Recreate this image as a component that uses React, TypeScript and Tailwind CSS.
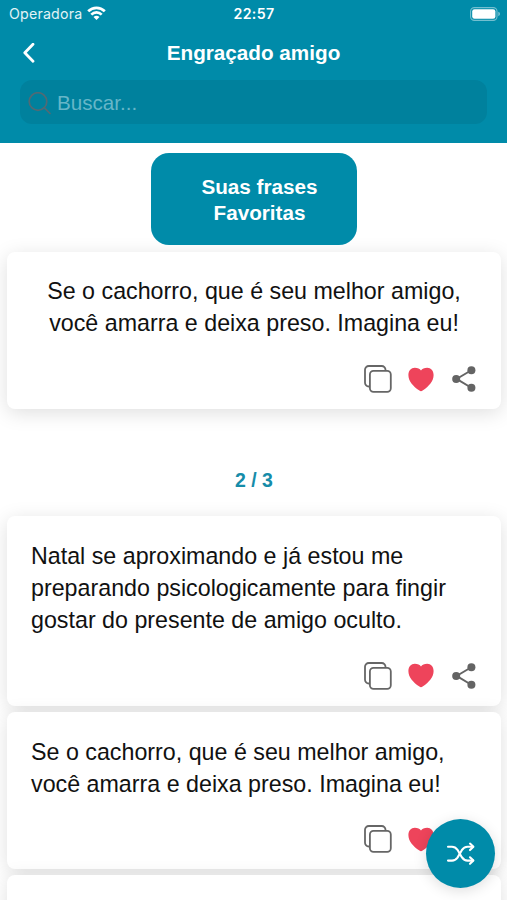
import { ReactNode } from "react";

function CopyIcon() {
  return (
    <svg width="28" height="28" viewBox="0 0 28 28" fill="none" stroke="#666" strokeWidth="1.8">
      <path d="M5.8 21.5 H4.8 A3.8 3.8 0 0 1 1 17.7 V4.8 A3.8 3.8 0 0 1 4.8 1 H17.7 A3.8 3.8 0 0 1 21.5 4.8 V5.8" />
      <rect x="5.9" y="5.9" width="20.9" height="20.9" rx="3.6" />
    </svg>
  );
}

function HeartIcon() {
  return (
    <svg width="26" height="25" viewBox="0 0 26 25" fill="#ee445b">
      <path d="M13 24.3 C12.4 24.3 11.9 24 11.4 23.6 C5 19.2 .4 14.2 .4 8 C.4 3.9 3.1.8 6.8.8 C9.7.8 11.8 1.8 13 3.6 C14.2 1.8 16.3.8 19.2.8 C22.9.8 25.6 3.9 25.6 8 C25.6 14.2 21 19.2 14.6 23.6 C14.1 24 13.6 24.3 13 24.3 Z" />
    </svg>
  );
}

function ShareIcon() {
  return (
    <svg width="24" height="26" viewBox="0 0 24 26" fill="#646464" stroke="#646464">
      <path d="M19.3 4.3 L4.6 12.9 L19.3 21.7" fill="none" strokeWidth="1.9" />
      <g stroke="none">
        <circle cx="19.4" cy="4.3" r="4" />
        <circle cx="4.2" cy="12.9" r="4" />
        <circle cx="19.4" cy="21.7" r="4" />
      </g>
    </svg>
  );
}

function ShuffleIcon() {
  return (
    <svg width="30" height="24" viewBox="0 0 30 24" fill="none" stroke="#fff" strokeWidth="2.1" strokeLinecap="round" strokeLinejoin="round">
      <path d="M2 4.8 H6 C8.7 4.8 10 5.8 11.5 7.8 L15.8 15.2 C17.4 17.6 19 18.6 21.5 18.6 H27" />
      <path d="M2 18.6 H6 C8.7 18.6 10 17.6 11.5 15.6 L15.8 8.2 C17.4 5.8 19 4.8 21.5 4.8 H27" />
      <path d="M24 1.6 L27.4 4.8 L24 8.1 M24 15.3 L27.4 18.6 L24 21.8" />
    </svg>
  );
}

function QuoteCard({ children, centered = false }: { children: ReactNode; centered?: boolean }) {
  return (
    <article className="rounded-lg bg-white pt-6 shadow-[0_4px_20px_rgba(0,0,0,0.13)]">
      <p className={centered ? "-mt-px mb-px text-center text-[23.25px] leading-8 text-[#111]" : "pl-6 text-[23.25px] leading-8 text-[#111]"}>
        {children}
      </p>
      <div className="flex h-[69.5px] items-center justify-end pr-[25px] pt-[10px]">
        <CopyIcon />
        <span className="ml-4"><HeartIcon /></span>
        <span className="ml-[18px]"><ShareIcon /></span>
      </div>
    </article>
  );
}

export default function App() {
  return (
    <div className="relative h-[900px] w-[507px] overflow-hidden bg-white font-['Liberation_Sans',Arial,sans-serif]">
      <header className="h-[142.5px] bg-[#008ba9] text-white">
        <div className="grid h-7 grid-cols-3 items-center pl-[9px] pr-[7px] font-[Inter,sans-serif]">
          <div className="flex items-center gap-[5px] text-[14.2px] tracking-[0.2px] text-[#e2f3f6]">
            <span>Operadora</span>
            <svg width="19" height="15" viewBox="0 0 19 15" fill="none" stroke="#fff" strokeWidth="2.7">
              <path d="M1.2 5.3 C5.9.6 13.1.6 17.8 5.3" />
              <path d="M4.3 8.6 C7.3 5.7 11.7 5.7 14.7 8.6" />
              <path d="M6.5 11 Q9.5 8.5 12.5 11 L9.5 14.1 Z" fill="#fff" stroke="none" />
            </svg>
          </div>
          <span className="pr-px text-center text-[14.2px] font-semibold tracking-[0.3px]">22:57</span>
          <svg className="justify-self-end" width="30" height="14" viewBox="0 0 30 14">
            <rect x=".6" y=".6" width="26.4" height="12.8" rx="3.8" fill="none" stroke="#fff" strokeOpacity=".45" strokeWidth="1.1" />
            <rect x="2.2" y="2.2" width="23.2" height="9.6" rx="2.3" fill="#fff" />
            <path d="M28.3 4.8 Q30 5.4 30 7 Q30 8.6 28.3 9.2 Z" fill="#fff" fillOpacity=".5" />
          </svg>
        </div>
        <div className="grid h-[52px] grid-cols-[40px_1fr_40px] items-center px-5">
          <svg width="18" height="22" viewBox="0 0 18 22" fill="none" stroke="#fff" strokeWidth="2.8" strokeLinecap="round" strokeLinejoin="round">
            <path d="M13 1.2 L4.8 9.7 L13 18.2" />
          </svg>
          <h1 className="pb-[3px] text-center text-[20.7px] font-bold">Engraçado amigo</h1>
        </div>
        <div className="mx-5 flex h-11 items-center rounded-xl bg-[#00819d] pl-2 text-[20.6px] text-[#66b6c8]">
          <svg className="mr-[6px] mt-[2px]" width="23" height="23" viewBox="0 0 23 23" fill="none" stroke="#526a74" strokeWidth="1.7" strokeLinecap="round">
            <circle cx="10" cy="9.5" r="8.8" />
            <path d="M16.2 15.7 L22 21.5" />
          </svg>
          <span className="pt-[3px]">Buscar...</span>
        </div>
      </header>

      <div className="flex justify-center pt-[10px]">
        <button className="h-[92.5px] w-[206px] rounded-[18px] bg-[#008ba9] pl-[12px] pt-[2px] text-[20.7px] font-bold leading-[26px] text-white">
          Suas frases<br />Favoritas
        </button>
      </div>

      <main className="mt-[6.5px] pl-[7px] pr-[6px]">
        <QuoteCard centered>
          Se o cachorro, que é seu melhor amigo,<br />você amarra e deixa preso. Imagina eu!
        </QuoteCard>
        <div className="flex h-[107px] items-center justify-center pt-9 text-[19.5px] font-bold text-[#168ca9]">2 / 3</div>
        <div className="flex flex-col gap-[6px]">
          <QuoteCard>
            Natal se aproximando e já estou me<br />preparando psicologicamente para fingir<br />gostar do presente de amigo oculto.
          </QuoteCard>
          <QuoteCard>
            Se o cachorro, que é seu melhor amigo,<br />você amarra e deixa preso. Imagina eu!
          </QuoteCard>
          <QuoteCard>{null}</QuoteCard>
        </div>
      </main>

      <button className="absolute left-[426px] top-[819px] flex h-[69px] w-[69px] items-center justify-center rounded-full bg-[#008ba9] shadow-[0_3px_14px_rgba(0,0,0,0.13)]">
        <ShuffleIcon />
      </button>
    </div>
  );
}
